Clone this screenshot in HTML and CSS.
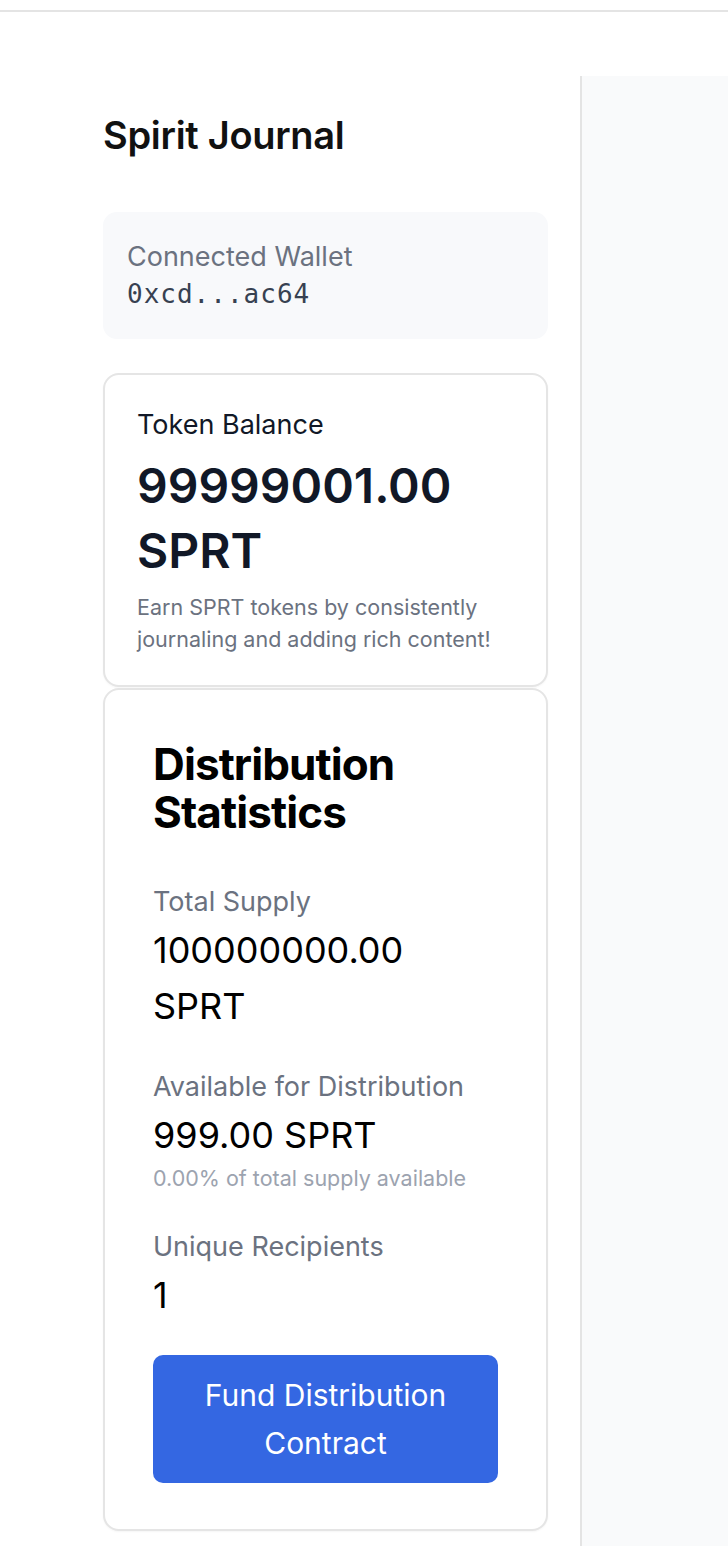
FILE: index.html
```html
<!DOCTYPE html>
<html lang="en">
<head>
<meta charset="utf-8">
<title>Spirit Journal</title>
<link rel="stylesheet" href="styles.css">
</head>
<body>
<div class="topbar"></div>
<div class="layout">
  <aside class="sidebar">
    <h1 class="app-title">Spirit Journal</h1>
    <div class="wallet">
      <div class="wallet-label">Connected Wallet</div>
      <div class="wallet-address">0xcd...ac64</div>
    </div>
    <div class="card balance-card">
      <div class="balance-label">Token Balance</div>
      <div class="balance-value">99999001.00 SPRT</div>
      <p class="balance-hint">Earn SPRT tokens by consistently journaling and adding rich content!</p>
    </div>
    <div class="card stats-card">
      <h2 class="stats-title">Distribution Statistics</h2>
      <div class="stat">
        <div class="stat-label">Total Supply</div>
        <div class="stat-value">100000000.00 SPRT</div>
      </div>
      <div class="stat">
        <div class="stat-label">Available for Distribution</div>
        <div class="stat-value">999.00 SPRT</div>
        <div class="stat-note">0.00% of total supply available</div>
      </div>
      <div class="stat stat-last">
        <div class="stat-label">Unique Recipients</div>
        <div class="stat-value">1</div>
      </div>
      <button class="fund-btn">Fund Distribution Contract</button>
    </div>
  </aside>
  <main class="content"></main>
</div>
</body>
</html>
```

FILE: styles.css
```css
* { box-sizing: border-box; }
html, body { margin: 0; padding: 0; }
body {
  font-family: Inter, "Noto Sans", "Liberation Sans", sans-serif;
  background: #ffffff;
  color: #111111;
  width: 728px;
  height: 1546px;
  overflow: hidden;
}
.topbar {
  height: 12px;
  border-bottom: 2px solid #e4e4e4;
}
.layout {
  display: flex;
  margin-top: 64px;
  height: 1470px;
}
.sidebar {
  width: 580px;
  flex: none;
  padding: 32px 32px 0 103px;
}
.content {
  flex: 1;
  background: #f9fafb;
  border-left: 2px solid #e4e4e4;
}
.app-title {
  margin: 0 0 50px;
  font-size: 38px;
  line-height: 54px;
  font-weight: 600;
  color: #111111;
  letter-spacing: -0.3px;
}
.wallet {
  background: #f8f9fb;
  border-radius: 14px;
  padding: 27px 24px 26px;
}
.wallet-label {
  font-size: 27px;
  line-height: 36px;
  color: #6b7280;
}
.wallet-address {
  font-family: "DejaVu Sans Mono", "Liberation Mono", monospace;
  font-size: 26px;
  line-height: 38px;
  color: #374151;
  letter-spacing: 1px;
}
.card {
  background: #ffffff;
  border: 2px solid #e5e5e5;
  border-radius: 16px;
  box-shadow: 0 1px 2px rgba(0, 0, 0, 0.04);
}
.balance-card {
  margin-top: 34px;
  padding: 32px 32px 30px;
}
.balance-label {
  font-size: 27px;
  line-height: 36px;
  color: #111827;
}
.balance-value {
  margin-top: 10px;
  font-size: 48px;
  line-height: 65px;
  font-weight: 600;
  color: #111827;
}
.balance-hint {
  margin: 8px 0 0;
  font-size: 21.5px;
  line-height: 32px;
  color: #6b7280;
}
.stats-card {
  margin-top: 1px;
  padding: 50px 48px 46px;
}
.stats-title {
  margin: 0 0 48px;
  font-size: 44px;
  line-height: 48px;
  font-weight: 700;
  color: #000000;
  letter-spacing: -0.9px;
}
.stat { margin-bottom: 35px; }
.stat-last { margin-bottom: 32px; }
.stat-label {
  font-size: 27px;
  line-height: 36px;
  color: #6b7280;
}
.stat-value {
  margin-top: 2px;
  font-size: 36px;
  line-height: 56px;
  color: #000000;
}
.stat-note {
  font-size: 21.5px;
  line-height: 31px;
  color: #9ca3af;
}
.fund-btn {
  display: block;
  width: 100%;
  border: none;
  border-radius: 10px;
  background: #3467e2;
  color: #ffffff;
  font-family: inherit;
  font-size: 30px;
  line-height: 48px;
  padding: 16px 24px;
  text-align: center;
}
```
